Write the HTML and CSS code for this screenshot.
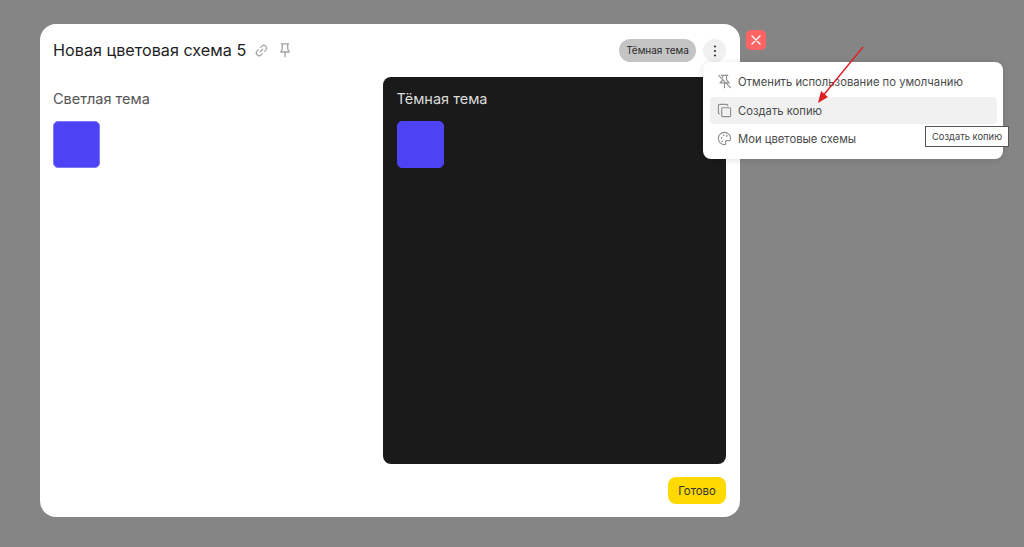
FILE: index.html
```html
<!DOCTYPE html>
<html lang="ru">
<head>
<meta charset="utf-8">
<title>Новая цветовая схема 5</title>
<link rel="stylesheet" href="styles.css">
</head>
<body>
<div class="modal">
  <header class="modal-head">
    <h1 class="title">Новая цветовая схема 5</h1>
    <svg class="ico-head link" viewBox="0 0 16 16"><path d="M6.600 9.400l2.800-2.800M7 4.600l1.300-1.300a3 3 0 0 1 4.300 4.300L11.300 8.900M9 11.400l-1.300 1.300a3 3 0 0 1-4.300-4.300L4.700 7.100"/></svg>
    <svg class="ico-head pin" viewBox="0 0 16 16"><path d="M4.300 1.800h7.400M5.300 1.800v5.200L3.800 10h8.400l-1.500-3V1.800M8 10v4.700"/></svg>
    <span class="spacer"></span>
    <span class="pill">Тёмная тема</span>
    <button class="more"><svg viewBox="0 0 16 16"><circle cx="8" cy="3.500" r="1.100"/><circle cx="8" cy="8" r="1.100"/><circle cx="8" cy="12.500" r="1.100"/></svg></button>
  </header>
  <div class="themes">
    <section class="theme light">
      <h2 class="theme-name">Светлая тема</h2>
      <div class="swatch"></div>
    </section>
    <section class="theme dark">
      <h2 class="theme-name">Тёмная тема</h2>
      <div class="swatch"></div>
    </section>
  </div>
  <footer class="modal-foot"><button class="done">Готово</button></footer>
</div>
<button class="close"><svg viewBox="0 0 20 20"><path d="M6 6l8 8M14 6l-8 8"/></svg></button>
<div class="menu">
  <div class="menu-item">
    <svg class="ico-menu" viewBox="0 0 16 16"><path d="M5 1.500h6.500M10.200 1.500v4.700l2.800 3.300H8.500M6 1.500v2M5.700 6.500L3.200 9.500h4M8 9.500v5.200M1.800 1.500l12.600 13"/></svg>
    <span>Отменить использование по умолчанию</span>
  </div>
  <div class="menu-item active">
    <svg class="ico-menu" viewBox="0 0 16 16"><rect x="5" y="5" width="9.500" height="9.500" rx="1.200"/><path d="M2.800 11.500A1.300 1.300 0 0 1 1.500 10.200V2.800a1.300 1.300 0 0 1 1.300-1.300h7.400a1.300 1.300 0 0 1 1.300 1.300"/></svg>
    <span>Создать копию</span>
  </div>
  <div class="menu-item">
    <svg class="ico-menu" viewBox="0 0 16 16"><path d="M8 1.500a6.500 6.500 0 0 0 0 13c1.500 0 1.800-1 1.300-2-.6-1.300.2-2.300 1.500-2.300h2.200c1 0 1.500-.8 1.500-2.200 0-3.600-2.900-6.500-6.500-6.500z"/><circle class="dot" cx="4.800" cy="7.500" r=".9"/><circle class="dot" cx="7" cy="4.600" r=".9"/><circle class="dot" cx="10.500" cy="5.200" r=".9"/><circle class="dot" cx="5.500" cy="11" r=".9"/></svg>
    <span>Мои цветовые схемы</span>
  </div>
</div>
<div class="tooltip">Создать копию</div>
<svg class="arrow" viewBox="0 0 60 70"><path class="shaft" d="M50 2L9 52"/><path class="head" d="M5 58L8 46L15 52Z"/></svg>
</body>
</html>
```
FILE: styles.css
```css
* { box-sizing: border-box; }
html, body { height: 100%; }
body {
  margin: 0;
  height: 547px;
  overflow: hidden;
  padding: 24px 0 0 40px;
  background: #858585;
  font-family: Inter, "Liberation Sans", sans-serif;
  color: #333;
}
button { font: inherit; border: 0; padding: 0; }
.modal {
  width: 700px;
  height: 493px;
  background: #fff;
  border-radius: 16px;
  padding: 14px 14px 13px 13px;
  display: flex;
  flex-direction: column;
}
.modal-head {
  display: flex;
  align-items: center;
  height: 25px;
  flex: none;
}
.title {
  margin: 0;
  font-size: 16.200px;
  font-weight: 400;
  line-height: 25px;
  color: #1e1e1e;
}
.ico-head {
  width: 15px;
  height: 15px;
  fill: none;
  stroke: #a3a3a3;
  stroke-width: 1.300;
  stroke-linecap: round;
  stroke-linejoin: round;
}
.ico-head.link { margin-left: 8px; }
.ico-head.pin { margin-left: 8px; width: 16px; height: 16px; margin-top: -2px; }
.spacer { flex: 1; }
.pill {
  height: 23px;
  line-height: 23px;
  width: 77px;
  text-align: center;
  white-space: nowrap;
  background: #c4c4c4;
  border-radius: 12px;
  font-size: 10px;
  color: #2a2a2a;
}
.more {
  width: 23px;
  height: 23px;
  margin-left: 7px;
  border-radius: 50%;
  background: #f0f0f0;
  display: flex;
  align-items: center;
  justify-content: center;
}
.more svg { width: 16px; height: 16px; fill: #333; }
.themes {
  flex: 1;
  display: flex;
  justify-content: space-between;
  margin-top: 14px;
  min-height: 0;
}
.theme {
  width: 343px;
  border-radius: 8px;
  padding: 13px 13px 13px 13.500px;
}
.theme.light { padding-left: 0; width: 300px; }
.theme.dark { background: #1a1a1a; }
.theme-name {
  margin: 0;
  font-size: 14.500px;
  font-weight: 400;
  line-height: 18px;
  color: #555;
}
.dark .theme-name { color: #dcdcdc; }
.swatch {
  width: 47px;
  height: 47px;
  margin-top: 13px;
  border-radius: 5px;
  background: #4d43f5;
  border: 1px solid #7f78f8;
}
.dark .swatch { border-color: #4d43f5; }
.modal-foot {
  flex: none;
  display: flex;
  justify-content: flex-end;
  margin-top: 13px;
}
.done {
  width: 58px;
  height: 27px;
  border-radius: 8px;
  background: #ffd900;
  font-size: 11.400px;
  color: #333;
}
.close {
  position: absolute;
  left: 746px;
  top: 30px;
  width: 20px;
  height: 20px;
  border-radius: 5px;
  background: #ff6464;
}
.close svg { display: block; width: 20px; height: 20px; fill: none; stroke: #fff; stroke-width: 1.300; stroke-linecap: round; }
.menu {
  position: absolute;
  left: 703px;
  top: 62px;
  width: 300px;
  height: 97px;
  padding: 6px 6px 6px 7px;
  background: #fff;
  border-radius: 8px;
  box-shadow: 0 1px 6px rgba(0,0,0,.12);
  display: flex;
  flex-direction: column;
  gap: 1px;
}
.menu-item {
  display: flex;
  align-items: center;
  height: 27px;
  padding-left: 7px;
  border-radius: 4px;
  font-size: 11.250px;
  color: #4a4a4a;
  white-space: nowrap;
}
.menu-item.active { background: #f1f1f1; margin-top: 1px; }
.ico-menu {
  flex: none;
  width: 15px;
  height: 15px;
  margin-right: 6px;
  fill: none;
  stroke: #8f8f8f;
  stroke-width: 1.200;
  stroke-linecap: round;
  stroke-linejoin: round;
}
.ico-menu .dot { fill: #8f8f8f; stroke: none; }
.tooltip {
  position: absolute;
  left: 925px;
  top: 126px;
  width: 84px;
  height: 21px;
  line-height: 19px;
  text-align: center;
  white-space: nowrap;
  background: #fff;
  border: 1px solid #555;
  font-size: 9.400px;
  color: #444;
}
.arrow {
  position: absolute;
  left: 813px;
  top: 45px;
  width: 60px;
  height: 70px;
}
.shaft { fill: none; stroke: #e01f26; stroke-width: 1.400; }
.head { fill: #e01f26; }
```
